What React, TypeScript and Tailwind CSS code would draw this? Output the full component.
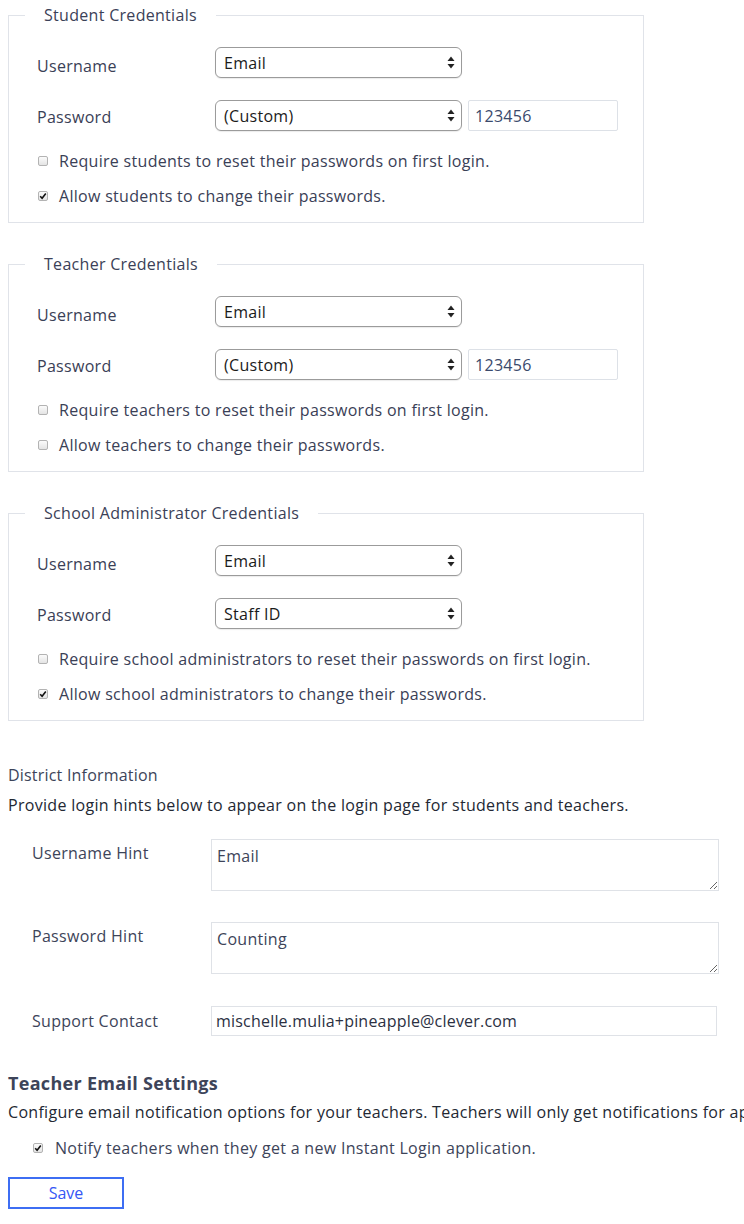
import React from "react";

const FONT = "font-['Open_Sans','Liberation_Sans',Arial,sans-serif]";

function SelectBox({ value }: { value: string }) {
  return (
    <div className="relative w-[247px] h-[31px]">
      <select
        defaultValue={value}
        className={`appearance-none w-full h-full rounded-[6px] border border-[#9b9b9b] bg-white pl-[8px] pr-[24px] text-[16px] text-[#1b1b1b] ${FONT} tracking-[0.3px] outline-none shadow-[0_1px_1px_rgba(0,0,0,0.08)]`}
      >
        <option>{value}</option>
      </select>
      <svg
        className="absolute right-[7px] top-[9px] pointer-events-none"
        width="8"
        height="13"
        viewBox="0 0 8 13"
      >
        <path d="M4 0.5 L7.5 5 L0.5 5 Z" fill="#222" />
        <path d="M4 12.5 L7.5 8 L0.5 8 Z" fill="#222" />
      </svg>
    </div>
  );
}

function Check({ checked }: { checked: boolean }) {
  return (
    <span className="inline-flex items-center justify-center w-[10px] h-[10px] rounded-[2px] border border-[#b3b3b3] bg-gradient-to-b from-[#fbfbfb] to-[#e4e4e4] shrink-0">
      {checked && (
        <svg width="8" height="8" viewBox="0 0 8 8">
          <path d="M1.2 4.2 L3.1 6.2 L6.8 1.4" fill="none" stroke="#111" strokeWidth="1.6" />
        </svg>
      )}
    </span>
  );
}

function CredFieldset({
  title,
  custom,
  who,
  requireChecked,
  allowChecked,
  passwordValue,
  first,
}: {
  title: string;
  custom: boolean;
  who: string;
  requireChecked: boolean;
  allowChecked: boolean;
  passwordValue: string;
  first?: boolean;
}) {
  return (
    <fieldset
      className={`${first ? "mt-[3px]" : "mt-[29px]"} w-[636px] border border-[#e0e3e9] p-0 m-0`}
    >
      <legend className="ml-[16px] px-[19px] leading-[24px] text-[16px] text-[#3b4157]">
        {title}
      </legend>
      <div className="pl-[28px] pr-[20px] pt-[20px] pb-[14px]">
        <div className="flex items-center h-[31px]">
          <div className="w-[178px] pt-[6px]">Username</div>
          <SelectBox value="Email" />
        </div>
        <div className="flex items-center h-[31px] mt-[22px]">
          <div className="w-[178px] pt-[2px]">Password</div>
          <SelectBox value={passwordValue} />
          {custom && (
            <input
              defaultValue="123456"
              className={`ml-[6px] w-[150px] h-[31px] border border-[#dde1e7] rounded-[2px] px-[6px] text-[16px] text-[#3b4a6c] outline-none ${FONT} tracking-[0.3px]`}
            />
          )}
        </div>
        <div className="flex items-center gap-[11px] h-[24px] mt-[18px] pl-[1px]">
          <Check checked={requireChecked} />
          <span>Require {who} to reset their passwords on first login.</span>
        </div>
        <div className="flex items-center gap-[11px] h-[24px] mt-[11px] pl-[1px]">
          <Check checked={allowChecked} />
          <span>Allow {who} to change their passwords.</span>
        </div>
      </div>
    </fieldset>
  );
}

export default function App() {
  return (
    <div className={`w-[744px] h-[1224px] overflow-hidden bg-white ${FONT} text-[16px] leading-[24px] text-[#3a4056] tracking-[0.3px]`}>
      <div className="pl-[8px]">
        <CredFieldset
          first
          title="Student Credentials"
          custom
          who="students"
          requireChecked={false}
          allowChecked
          passwordValue="(Custom)"
        />
        <CredFieldset
          title="Teacher Credentials"
          custom
          who="teachers"
          requireChecked={false}
          allowChecked={false}
          passwordValue="(Custom)"
        />
        <CredFieldset
          title="School Administrator Credentials"
          custom={false}
          who="school administrators"
          requireChecked={false}
          allowChecked
          passwordValue="Staff ID"
        />

        <h3 className="mt-[42px] text-[16px] leading-[24px] font-medium text-[#3d4459] tracking-[0.2px]">
          District Information
        </h3>
        <p className="mt-[6px] text-[#232833] whitespace-nowrap">
          Provide login hints below to appear on the login page for students and teachers.
        </p>

        <div className="pl-[24px] mt-[22px]">
          <div className="flex items-start">
            <div className="w-[179px] pt-[2px] text-[#3d4459]">Username Hint</div>
            <textarea
              defaultValue="Email"
              className={`w-[508px] h-[52px] border border-[#dfe2e7] px-[5px] py-[5px] text-[16px] leading-[22px] text-[#3d4459] outline-none ${FONT} tracking-[0.3px]`}
            />
          </div>
          <div className="flex items-start mt-[31px]">
            <div className="w-[179px] pt-[2px] text-[#3d4459]">Password Hint</div>
            <textarea
              defaultValue="Counting"
              className={`w-[508px] h-[52px] border border-[#dfe2e7] px-[5px] py-[5px] text-[16px] leading-[22px] text-[#3d4459] outline-none ${FONT} tracking-[0.3px]`}
            />
          </div>
          <div className="flex items-center mt-[32px]">
            <div className="w-[179px] text-[#3d4459]">Support Contact</div>
            <input
              defaultValue="mischelle.mulia+pineapple@clever.com"
              className={`w-[506px] h-[30px] border border-[#dfe2e7] px-[4px] text-[16px] text-[#2b3042] outline-none ${FONT} tracking-[0.2px]`}
            />
          </div>
        </div>

        <h3 className="mt-[34px] text-[18px] leading-[26px] font-bold text-[#3d4459] tracking-[0.3px]">
          Teacher Email Settings
        </h3>
        <p className="mt-[4px] text-[#232833] whitespace-nowrap">
          Configure email notification options for your teachers. Teachers will only get notifications for ap
        </p>
        <div className="flex items-center gap-[12px] h-[24px] mt-[12px] pl-[25px]">
          <Check checked />
          <span className="text-[#3d4459]">Notify teachers when they get a new Instant Login application.</span>
        </div>
        <button className="mt-[17px] w-[116px] h-[32px] border-2 border-[#3e6ef3] bg-white text-[#3556f5] text-[16px] leading-[24px] tracking-normal">
          Save
        </button>
      </div>
    </div>
  );
}
